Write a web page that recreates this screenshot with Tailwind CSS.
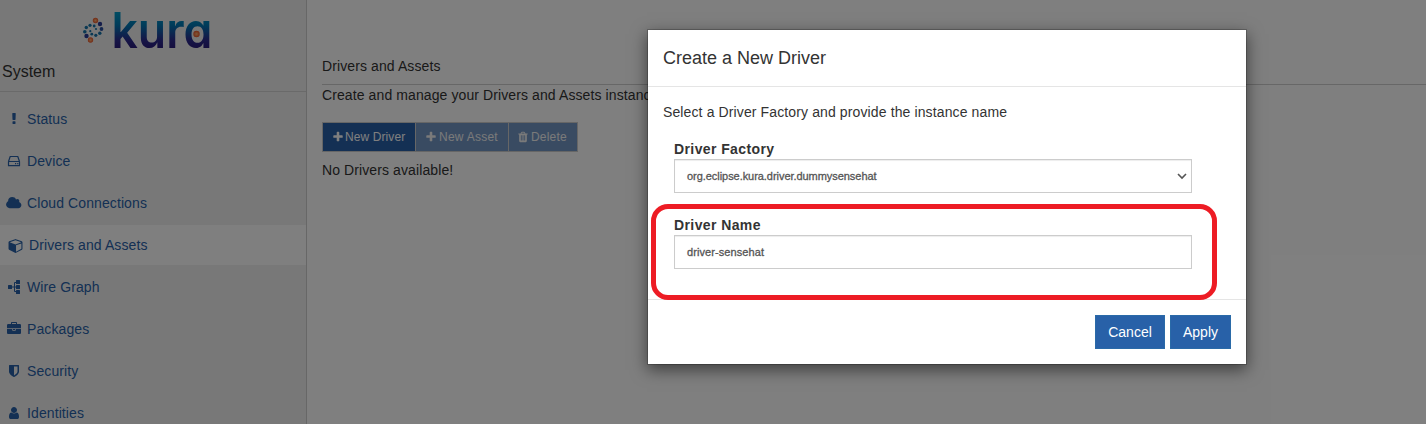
<!DOCTYPE html>
<html lang="en">
<head>
<meta charset="utf-8">
<title>Kura</title>
<script src="https://cdn.jsdelivr.net/npm/@tailwindcss/browser@4"></script>
</head>
<body class="relative h-[424px] w-[1426px] overflow-hidden bg-white font-['Liberation_Sans',Arial,sans-serif] text-sm leading-5 text-[#333]">
<div class="flex h-full">
  <aside class="flex w-[307px] shrink-0 flex-col border-r border-[#cfcfcf] bg-[#f1f1f1]">
    <div class="flex h-[60px] shrink-0 justify-center pr-[13px]">
      <svg class="h-[60px] w-[140px] overflow-visible" viewBox="77 0 140 60">
        <defs>
          <linearGradient id="ink" gradientUnits="userSpaceOnUse" x1="0" y1="10" x2="0" y2="48"><stop offset="0" stop-color="#009fc9"/><stop offset=".4" stop-color="#0078b4"/><stop offset=".8" stop-color="#2c2a8e"/><stop offset="1" stop-color="#2b1d7c"/></linearGradient>
          <radialGradient id="orb"><stop offset="0" stop-color="#ffb070"/><stop offset="1" stop-color="#e8562a"/></radialGradient>
        </defs>
        <g fill="#1673a8">
          <circle cx="95.500" cy="20.500" r="2.700" fill="url(#orb)"/><circle cx="90.500" cy="40" r="2.700" fill="url(#orb)"/>
          <circle cx="100" cy="24" r="2.200" fill="#2b3a94"/><circle cx="101.500" cy="29" r="1.900" fill="#2b4f9c"/><circle cx="99.800" cy="33.300" r="1.700"/><circle cx="95.800" cy="35.300" r="1.600"/><circle cx="91.800" cy="34.200" r="1.400"/><circle cx="90.300" cy="31.200" r="1.100"/>
          <circle cx="86.500" cy="36" r="2.200" fill="#2b3a94"/><circle cx="84.800" cy="31.700" r="1.800"/><circle cx="86.300" cy="27.500" r="1.700"/><circle cx="90" cy="25.300" r="1.600"/><circle cx="94.200" cy="26" r="1.400"/><circle cx="96" cy="29" r="1.100"/>
        </g>
        <text x="111.500" y="48" textLength="101" lengthAdjust="spacingAndGlyphs" font-family="Inter, sans-serif" font-weight="600" font-size="50" fill="url(#ink)" style="font-feature-settings:'cv11'">kura</text>
        <circle cx="196.500" cy="34" r="3.200" fill="url(#orb)"/>
      </svg>
    </div>
    <div class="flex h-8 shrink-0 items-start border-b border-[#d4d4d4] pl-0.5 pt-0.5 text-base leading-5">System</div>
    <nav class="flex shrink-0 flex-col pt-[7px] tracking-[0.1px] text-[#2861a8]">
      <a class="flex h-[42px] items-center gap-1 pb-1 pl-[5px] pt-px"><svg class="h-3.5 w-[18px]" viewBox="0 0 1792 1792" fill="currentColor"><path d="M1088 1248v224q0 26-19 45t-45 19h-256q-26 0-45-19t-19-45v-224q0-26 19-45t45-19h256q26 0 45 19t19 45zm30-1056l-28 768q-1 26-20.500 45t-45.500 19h-256q-26 0-45.500-19t-20.500-45l-28-768q-1-26 17.500-45t44.500-19h320q26 0 44.500 19t17.500 45z"/></svg>Status</a>
      <a class="flex h-[42px] items-center gap-1 pb-1 pl-[5px] pt-px"><svg class="h-3.5 w-[18px]" viewBox="0 0 18 14" fill="none" stroke="currentColor" stroke-width="1.200" stroke-linejoin="round"><path d="M3.500 7.500L5.200 2.500h7.600L14.500 7.500M3.500 7.500h11v4.200h-11z"/><path d="M10 9.700h1.200M12.200 9.700h1.200"/></svg>Device</a>
      <a class="flex h-[42px] items-center gap-1 pb-1 pl-[5px] pt-px"><svg class="h-3.5 w-[18px]" viewBox="0 128 1984 1536" fill="currentColor"><path d="M1984 1152q0 159-112.500 271.500t-271.500 112.500h-1088q-185 0-316.500-131.500t-131.500-316.500q0-132 71-241.500t187-163.500q-2-28-2-43 0-212 150-362t362-150q158 0 286.500 88t187.500 230q70-62 166-62 106 0 181 75t75 181q0 75-41 138 129 30 213 134.500t84 239.500z" transform="translate(60 110) scale(.88)"/></svg>Cloud Connections</a>
      <a class="flex h-10 items-center gap-1.5 bg-[#fefefe] pl-2"><svg class="h-[15px] w-[15px]" viewBox="-64 0 1792 1792" fill="currentColor"><path fill-rule="evenodd" d="M896 1629l640-349v-636l-640 233v752zm-64-865l698-254-698-254-698 254zm832-252v768q0 35-18 65t-49 47l-704 384q-28 16-61 16t-61-16l-704-384q-31-17-49-47t-18-65v-768q0-40 23-73t61-47l704-256q22-8 44-8t44 8l704 256q38 14 61 47t23 73z"/></svg>Drivers and Assets</a>
      <a class="flex h-[42px] items-center gap-1 pb-px pl-[5px] pt-0.5"><svg class="h-3.5 w-[18px]" viewBox="0 0 18 14" fill="currentColor"><rect x="3" y="5" width="4" height="4" rx=".5"/><rect x="11" y="0" width="4" height="4" rx=".5"/><rect x="11" y="5" width="4" height="4" rx=".5"/><rect x="11" y="10" width="4" height="4" rx=".5"/><path d="M7 7h4M11 2.500H9.500v9H11" fill="none" stroke="currentColor"/></svg>Wire Graph</a>
      <a class="flex h-[42px] items-center gap-1 pb-px pl-[5px] pt-0.5"><svg class="h-3.5 w-[18px]" viewBox="0 0 1792 1792" fill="currentColor"><path d="M640 256h512v-128h-512v128zm1152 640v480q0 66-47 113t-113 47h-1472q-66 0-113-47t-47-113v-480h672v160q0 26 19 45t45 19h320q26 0 45-19t19-45v-160h672zm-768 0v128h-256v-128h256zm768-480v384h-1792v-384q0-66 47-113t113-47h352v-160q0-40 28-68t68-28h576q40 0 68 28t28 68v160h352q66 0 113 47t47 113z"/></svg>Packages</a>
      <a class="flex h-[42px] items-center gap-1 pb-px pl-[5px] pt-0.5"><svg class="h-3.5 w-[18px]" viewBox="0 0 1792 1792" fill="currentColor"><path d="M1344 960v-640h-448v1137q119-63 213-137 235-184 235-360zm192-768v768q0 86-33.500 170.500t-83 150-118 127.500-126.500 103-121 77.500-89.500 49.500-42.500 20q-12 6-26 6t-26-6q-16-7-42.500-20t-89.500-49.500-121-77.500-126.500-103-118-127.500-83-150-33.500-170.500v-768q0-26 19-45t45-19h1152q26 0 45 19t19 45z"/></svg>Security</a>
      <a class="flex h-[42px] items-center gap-1 pb-px pl-[5px] pt-0.5"><svg class="h-3.5 w-[18px]" viewBox="0 0 1792 1792" fill="currentColor"><path d="M1536 1399q0 109-62.500 187t-150.500 78h-854q-88 0-150.500-78t-62.500-187q0-85 8.500-160.500t31.500-152 58.500-131 94-89 134.500-34.500q131 128 313 128t313-128q76 0 134.500 34.500t94 89 58.500 131 31.500 152 8.500 160.500zm-256-887q0 159-112.500 271.500t-271.500 112.500-271.500-112.500-112.500-271.500 112.500-271.500 271.500-112.500 271.500 112.500 112.500 271.500z"/></svg>Identities</a>
    </nav>
  </aside>
  <main class="flex grow flex-col pl-[15px] pt-14 tracking-[0.1px]">
    <div class="h-[29px] border-b border-[#cfcfcf]">Drivers and Assets</div>
    <p>Create and manage your Drivers and Assets instances</p>
    <div class="mt-[17px] flex h-[30px] w-fit divide-x divide-[#ccc] border border-[#ccc] text-xs text-white">
      <button class="flex w-[93px] items-center gap-px bg-[#2861a8] pl-[9px]"><svg class="size-3" viewBox="0 0 1792 1792" fill="currentColor"><path d="M1600 736v192q0 40-28 68t-68 28h-416v416q0 40-28 68t-68 28h-192q-40 0-68-28t-28-68v-416h-416q-40 0-68-28t-28-68v-192q0-40 28-68t68-28h416v-416q0-40 28-68t68-28h192q40 0 68 28t28 68v416h416q40 0 68 28t28 68z"/></svg>New Driver</button>
      <button class="flex w-[93px] items-center gap-0.5 bg-[#7396c5] pl-[9px] tracking-[0.25px] text-[#f4f4f4]"><svg class="size-3" viewBox="0 0 1792 1792" fill="currentColor"><path d="M1600 736v192q0 40-28 68t-68 28h-416v416q0 40-28 68t-68 28h-192q-40 0-68-28t-28-68v-416h-416q-40 0-68-28t-28-68v-192q0-40 28-68t68-28h416v-416q0-40 28-68t68-28h192q40 0 68 28t28 68v416h416q40 0 68 28t28 68z"/></svg>New Asset</button>
      <button class="flex w-[68px] items-center gap-0.5 bg-[#7396c5] pl-[8px] tracking-[0.2px] text-[#f4f4f4]"><svg class="size-3" viewBox="0 0 1792 1792" fill="currentColor"><path d="M704 1376v-704q0-14-9-23t-23-9h-64q-14 0-23 9t-9 23v704q0 14 9 23t23 9h64q14 0 23-9t9-23zm256 0v-704q0-14-9-23t-23-9h-64q-14 0-23 9t-9 23v704q0 14 9 23t23 9h64q14 0 23-9t9-23zm256 0v-704q0-14-9-23t-23-9h-64q-14 0-23 9t-9 23v704q0 14 9 23t23 9h64q14 0 23-9t9-23zm-544-992h448l-48-117q-7-9-17-11h-317q-10 2-17 11zm928 32v64q0 14-9 23t-23 9h-96v948q0 83-47 143.500t-113 60.500h-832q-66 0-113-58.500t-47-141.500v-952h-96q-14 0-23-9t-9-23v-64q0-14 9-23t23-9h309l70-167q15-37 54-63t79-26h320q40 0 79 26t54 63l70 167h309q14 0 23 9t9 23z"/></svg>Delete</button>
    </div>
    <p class="mt-2">No Drivers available!</p>
  </main>
</div>
<div class="absolute inset-0 flex justify-start bg-black/50 pl-[647px] pt-[29px]">
  <section class="flex h-[336px] w-[600px] flex-col border border-black/20 bg-white bg-clip-padding shadow-[0_5px_15px_rgba(0,0,0,0.5)]">
    <h4 class="flex h-[57px] items-center border-b border-[#e5e5e5] pl-[15px] text-lg">Create a New Driver</h4>
    <div class="relative flex h-[213px] flex-col border-b border-[#e5e5e5] px-[15px] pt-[15px]">
      <p class="tracking-[0.12px]">Select a Driver Factory and provide the instance name</p>
      <div class="ml-[11px] mt-[17px] flex w-[518px] flex-col">
        <label class="font-bold tracking-[0.4px]">Driver Factory</label>
        <div class="flex h-[34px] items-center justify-between border border-[#ccc] pl-3 pr-1 text-[11px] tracking-[-0.05px] text-[#555] shadow-[inset_0_1px_1px_rgba(0,0,0,0.075)] [-webkit-text-stroke:0.3px_#555]"><span>org.eclipse.kura.driver.dummysensehat</span>
          <svg class="h-2 w-2.5" viewBox="0 0 10 8" fill="none" stroke="#555" stroke-width="1.600"><path d="M1 2l4 4 4-4"/></svg></div>
        <label class="mt-[22px] font-bold tracking-[0.4px]">Driver Name</label>
        <div class="flex h-[34px] items-center border border-[#ccc] pl-3 text-[11px] tracking-[0.08px] text-[#555] shadow-[inset_0_1px_1px_rgba(0,0,0,0.075)] [-webkit-text-stroke:0.3px_#555]">driver-sensehat</div>
      </div>
      <div class="absolute left-[3px] top-[117px] h-[96px] w-[566px] rounded-[17px] border-5 border-[#ed1c24]"></div>
    </div>
    <div class="flex justify-end gap-[5px] p-[15px] text-white">
      <button class="h-[34px] w-[70px] border border-[#2a6aa8] bg-[#2861a8]">Cancel</button>
      <button class="h-[34px] w-[61px] border border-[#2a6aa8] bg-[#2861a8]">Apply</button>
    </div>
  </section>
</div>
</body>
</html>
